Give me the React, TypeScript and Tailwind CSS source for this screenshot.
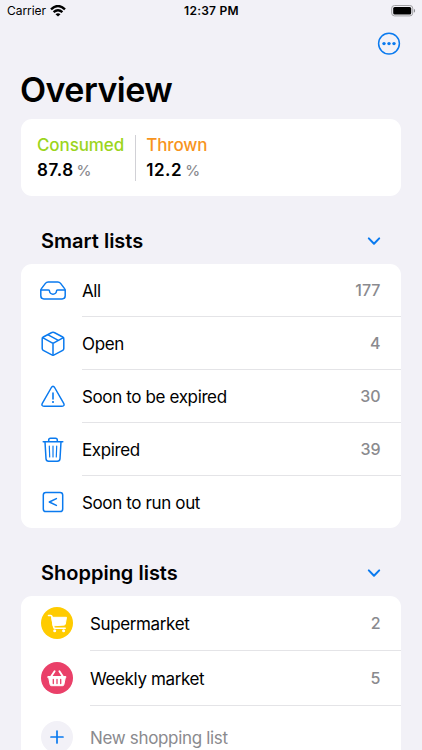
import type { ReactNode } from "react";

const stroke = {
  fill: "none",
  stroke: "#0a7aef",
  strokeWidth: 1.5,
  strokeLinecap: "round" as const,
  strokeLinejoin: "round" as const,
};

const TrayIcon = () => (
  <svg width="28" height="26" viewBox="0 0 28 26" {...stroke}>
    <path d="M1.8 12.6V17.800Q1.8 20.900 4.9 20.900H23.1Q26.2 20.900 26.2 17.800V12.6Q26.2 11.4 25.4 10.4L21.6 5.4Q20.5 4 18.8 4H9.2Q7.5 4 6.4 5.4L2.6 10.4Q1.8 11.4 1.8 12.6Z" />
    <path d="M2 12H9.5Q10.5 12 10.5 13A3.5 3.2 0 0 0 17.5 13Q17.5 12 18.5 12H26" />
  </svg>
);

const BoxIcon = () => (
  <svg width="28" height="26" viewBox="0 0 28 26" {...stroke}>
    <path d="M12.8 1.5Q14 0.800 15.2 1.5L23.7 6Q24.800 6.600 24.800 7.800V17.600Q24.800 18.800 23.700 19.400L15.200 23.900Q14 24.600 12.800 23.900L4.300 19.400Q3.200 18.800 3.200 17.600V7.800Q3.200 6.600 4.300 6Z" />
    <path d="M3.600 6.700L14 12.300L24.400 6.700M14 12.300V24.200M8.700 3.700L19.300 9.400" />
  </svg>
);

const WarningIcon = () => (
  <svg width="28" height="26" viewBox="0 0 28 26" {...stroke}>
    <path d="M12.400 3.500Q14 1.100 15.600 3.500L24.700 19.300Q26 22.200 23 22.300H5Q2 22.200 3.300 19.300Z" />
    <path d="M14 9V15" strokeWidth="1.600" />
    <circle cx="14" cy="18" r="1.100" fill="#0a7aef" stroke="none" />
  </svg>
);

const TrashIcon = () => (
  <svg width="28" height="26" viewBox="0 0 28 26" {...stroke}>
    <path d="M4.200 4.800H23.800M9.700 4.600V3Q9.700 1.200 11.500 1.200H16.500Q18.300 1.200 18.300 3V4.600" />
    <path d="M6 4.800L7 21.700Q7.200 24.200 9.700 24.200H18.300Q20.800 24.200 21 21.700L22 4.800" />
    <path d="M10.300 9L10.700 20M14 9V20M17.700 9L17.300 20" strokeWidth="1.200" />
  </svg>
);

const LessIcon = () => (
  <svg width="28" height="26" viewBox="0 0 28 26" {...stroke}>
    <rect x="4.300" y="3.500" width="19.400" height="19" rx="2.600" />
    <path d="M17.400 9.600L10.300 13L17.400 16.400" />
  </svg>
);

const CartIcon = () => (
  <svg width="32" height="32" viewBox="0 0 32 32" fill="none" stroke="white" strokeLinecap="round" strokeLinejoin="round">
    <path d="M7.500 8.500H9.700Q10.700 8.500 10.900 9.500L12.700 20Q12.900 21.200 14 21.200H24.200" strokeWidth="1.600" />
    <path d="M11.100 10.300H25.500L24.300 17.100Q24.100 18 23.100 18.100L12.400 18.800Z" fill="white" strokeWidth="1" />
    <circle cx="13.700" cy="23.700" r="1.500" fill="white" stroke="none" />
    <circle cx="22.600" cy="23.700" r="1.500" fill="white" stroke="none" />
  </svg>
);

const BasketIcon = () => (
  <svg width="32" height="32" viewBox="0 0 32 32" fill="none" stroke="white" strokeLinecap="round" strokeLinejoin="round">
    <path d="M9.800 15L13.600 9.200M22.200 15L18.400 9.200" strokeWidth="1.900" />
    <path d="M7.200 14.500H24.800V15.700H24.300L22.900 22.500Q22.700 23.700 21.600 23.700H10.400Q9.300 23.700 9.100 22.500L7.700 15.700H7.200Z" fill="white" strokeWidth="1" />
    <path d="M12.300 17.400V21.500M16 17.400V21.500M19.700 17.400V21.500" stroke="#ea4069" strokeWidth="1.300" />
  </svg>
);

const PlusIcon = () => (
  <svg width="32" height="32" viewBox="0 0 32 32" fill="none" stroke="#0a7aef" strokeWidth="1.700" strokeLinecap="round">
    <path d="M16 10V22M10 16H22" />
  </svg>
);

const smartLists = [
  { icon: <TrayIcon />, label: "All", count: "177", row: "h-[53px]", body: "border-b" },
  { icon: <BoxIcon />, label: "Open", count: "4", row: "h-[53px]", body: "border-b" },
  { icon: <WarningIcon />, label: "Soon to be expired", count: "30", row: "h-[53px]", body: "border-b" },
  { icon: <TrashIcon />, label: "Expired", count: "39", row: "h-[53px]", body: "border-b" },
  { icon: <LessIcon />, label: "Soon to run out", count: "", row: "h-[52px]", body: "" },
];

const shoppingLists = [
  { icon: <CartIcon />, label: "Supermarket", count: "2", color: "bg-[#ffcb00]" },
  { icon: <BasketIcon />, label: "Weekly market", count: "5", color: "bg-[#ea4069]" },
];

function SectionHeader({ children }: { children: ReactNode }) {
  return (
    <div className="flex h-[46px] items-center justify-between px-5">
      <h2 className="text-[20px] leading-6 font-semibold">{children}</h2>
      <svg width="14" height="10" viewBox="0 0 14 10" fill="none" stroke="#0a7aef" strokeWidth="2" strokeLinecap="round" strokeLinejoin="round">
        <path d="M1.800 2.400L7 7.800L12.200 2.400" />
      </svg>
    </div>
  );
}

function Stat({ label, value, color }: { label: string; value: string; color: string }) {
  return (
    <div>
      <div className={`text-[17px] leading-[25px] font-medium tracking-[-0.100px] ${color}`}>{label}</div>
      <div className="flex items-baseline gap-[3px] text-[17px] leading-[25px] font-semibold">
        <span className="tracking-[0.550px]">{value}</span>
        <span className="text-[15px] font-medium text-[#8a8a8e]">%</span>
      </div>
    </div>
  );
}

export default function App() {
  return (
    <div className="flex h-[750px] w-full flex-col overflow-hidden bg-[#f2f1f7] font-['Inter','Liberation_Sans',sans-serif] text-black">
      <div className="grid h-[22px] shrink-0 grid-cols-3 items-center pr-[6px] pl-[7px] text-[12px] leading-[22px]">
        <div className="flex items-center gap-1">
          <span className="tracking-[-0.050px]">Carrier</span>
          <svg width="16" height="12" viewBox="0 0 16 12" fill="none" stroke="black" strokeWidth="2.400">
            <path d="M1 4.300Q8-2.200 15 4.300M3.600 7.100Q8 3.200 12.400 7.100" />
            <path d="M8 11.500L5.500 9.200Q8 7.200 10.500 9.200Z" fill="black" stroke="none" />
          </svg>
        </div>
        <div className="text-center font-semibold tracking-[0.250px] whitespace-nowrap">12:37 PM</div>
        <svg className="justify-self-end" width="25" height="12" viewBox="0 0 25 12">
          <rect x="0.700" y="0.500" width="21" height="10.400" rx="2.800" fill="none" stroke="#a1a1a4" />
          <rect x="2.200" y="2" width="18" height="7.400" rx="1.500" />
          <path d="M22.900 3.700V7.700Q24.100 7.200 24.100 5.700T22.900 3.700Z" fill="#8d8d91" />
        </svg>
      </div>
      <div className="flex h-[43px] shrink-0 items-center justify-end pr-[21px]">
        <svg width="24" height="24" viewBox="0 0 24 24">
          <circle cx="12" cy="11.600" r="10.400" fill="none" stroke="#0a7aef" strokeWidth="1.500" />
          <g fill="#0a7aef">
            <circle cx="7" cy="11.600" r="1.700" />
            <circle cx="12" cy="11.600" r="1.700" />
            <circle cx="17" cy="11.600" r="1.700" />
          </g>
        </svg>
      </div>
      <main className="flex min-h-0 flex-1 flex-col px-[21px]">
        <h1 className="-ml-px h-[54px] shrink-0 text-[34px] leading-[50px] font-semibold tracking-[-0.550px]">Overview</h1>
        <section className="flex h-[77px] shrink-0 items-center rounded-[11px] bg-white px-4">
          <Stat label="Consumed" value="87.8" color="text-[#9bd51c]" />
          <div className="mr-[10px] ml-[11px] h-[46px] w-px bg-[#d1d1d6]" />
          <Stat label="Thrown" value="12.2" color="text-[#f7941d]" />
        </section>
        <section className="mt-[22px] shrink-0">
          <SectionHeader>Smart lists</SectionHeader>
          <ul className="overflow-hidden rounded-[11px] bg-white">
            {smartLists.map((item) => (
              <li key={item.label} className={`flex items-center pl-[18px] ${item.row}`}>
                <span className="mr-[15px]">{item.icon}</span>
                <div className={`flex h-full flex-1 items-center justify-between border-[#e4e4e7] pr-[20.5px] ${item.body}`}>
                  <span className="pt-px text-[17px] leading-6 tracking-[-0.370px]">{item.label}</span>
                  <span className="text-[16px] leading-6 font-medium text-[#8a8a8e]">{item.count}</span>
                </div>
              </li>
            ))}
          </ul>
        </section>
        <section className="mt-[22px] shrink-0">
          <SectionHeader>Shopping lists</SectionHeader>
          <ul className="rounded-t-[11px] bg-white">
            {shoppingLists.map((item) => (
              <li key={item.label} className="flex h-[55px] items-center pl-5">
                <span className={`mr-[17px] mb-px flex size-8 items-center justify-center rounded-full ${item.color}`}>{item.icon}</span>
                <div className="flex h-full flex-1 items-center justify-between border-b border-[#e4e4e7] pr-[20.5px]">
                  <span className="pt-px text-[17px] leading-6 tracking-[-0.370px]">{item.label}</span>
                  <span className="text-[16px] leading-6 font-medium text-[#8a8a8e]">{item.count}</span>
                </div>
              </li>
            ))}
            <li className="flex h-[63px] items-center pl-5">
              <span className="mr-[17px] mb-px size-8 rounded-full bg-[#f2f1f7]"><PlusIcon /></span>
              <span className="text-[17px] leading-6 tracking-[-0.330px] text-[#8a8a8e]">New shopping list</span>
            </li>
          </ul>
        </section>
      </main>
    </div>
  );
}
